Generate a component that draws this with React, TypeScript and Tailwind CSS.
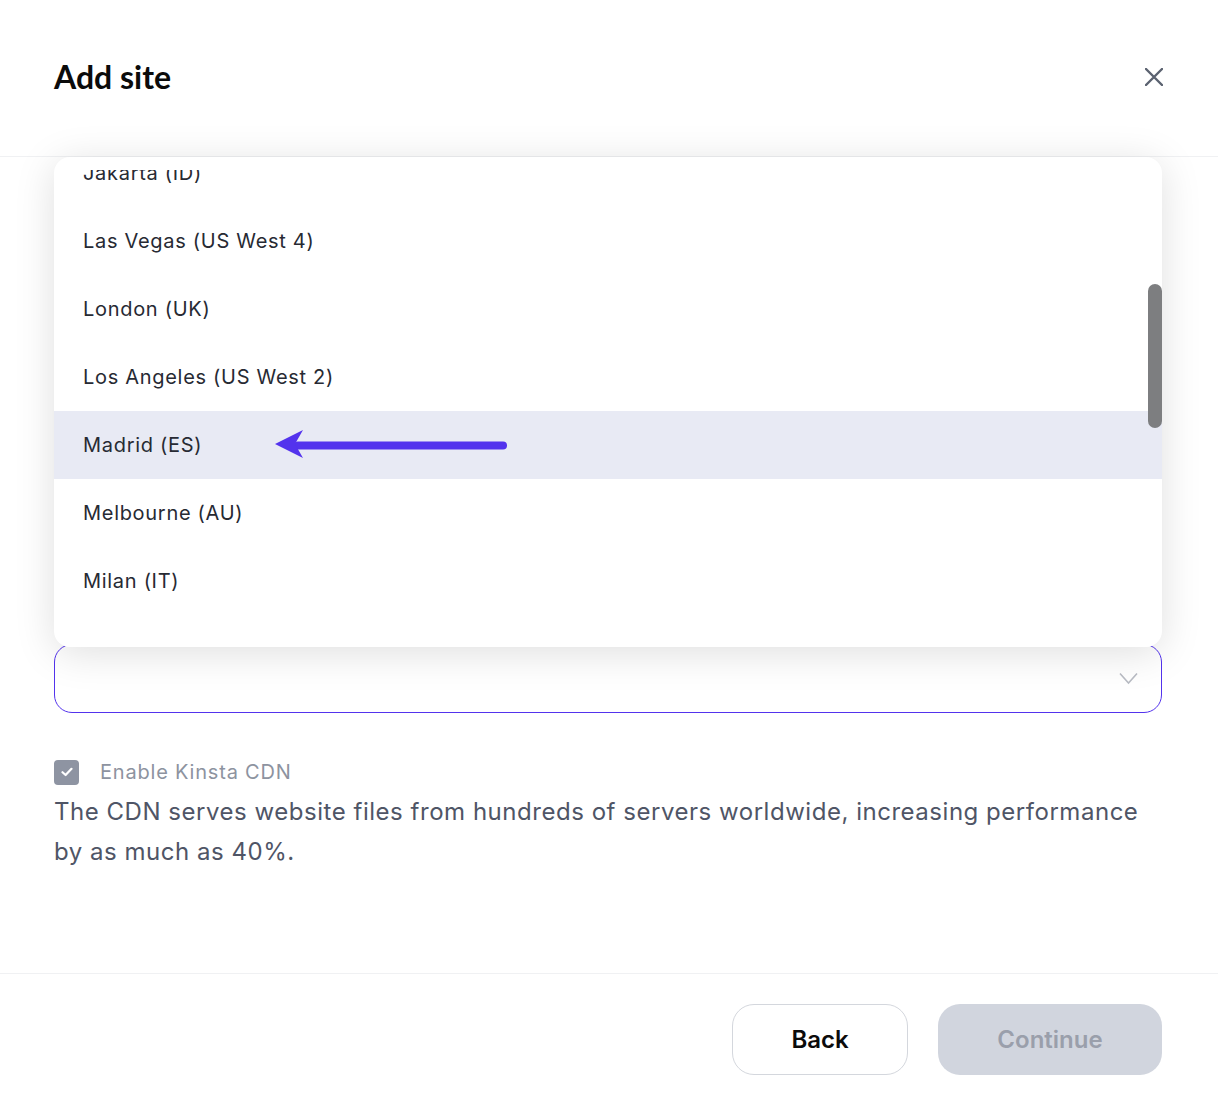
// Add site modal - data center dropdown open
import React from 'react';

const locations = [
  'Jakarta (ID)',
  'Las Vegas (US West 4)',
  'London (UK)',
  'Los Angeles (US West 2)',
  'Madrid (ES)',
  'Melbourne (AU)',
  'Milan (IT)',
];

const selected = 'Madrid (ES)';

function CloseIcon() {
  return (
    <svg width="18" height="18" viewBox="0 0 18 18" fill="none">
      <path d="M1 1L17 17M17 1L1 17" stroke="#5b6270" strokeWidth="2.4" strokeLinecap="round" />
    </svg>
  );
}

function Chevron() {
  return (
    <svg width="19" height="13" viewBox="0 0 19 13" fill="none">
      <path d="M1 1.5L9.5 11L18 1.5" stroke="#b9bcc4" strokeWidth="1.6" />
    </svg>
  );
}

function Arrow() {
  return (
    <svg width="236" height="32" viewBox="0 0 236 32" fill="none">
      <path d="M24 16.5H229" stroke="#5333ed" strokeWidth="8" strokeLinecap="round" />
      <path d="M1 15L29 1L21 15L29 29Z" fill="#5333ed" />
    </svg>
  );
}

export default function App() {
  return (
    <div className="w-[1218px] h-[1100px] bg-white flex flex-col font-['Inter','Noto_Sans',sans-serif] text-[#272a33]">
      {/* 頂部標題 */}
      <div className="h-[157px] shrink-0 flex items-center justify-between pl-[54px] pr-[55px] pb-[3px] border-b border-[#f0f1f3]">
        <h1 className="font-['Lato','Inter',sans-serif] font-bold text-[32px] leading-none text-[#0b0b0b]">Add site</h1>
        <button>
          <CloseIcon />
        </button>
      </div>

      {/* 表單內容 */}
      <div className="flex-1 pl-[54px] pr-[56px] pt-[34px] flex flex-col">
        {/* 下拉選單遮住的欄位 */}
        <div className="h-[69px] rounded-2xl border border-[#5333ed]" />
        <div className="h-[151px]" />
        <div className="h-[69px] rounded-2xl border border-[#d4d7dd]" />
        <div className="h-[164px]" />

        {/* 機房位置選單 */}
        <div className="relative h-[69px]">
          <div className="h-full rounded-[18px] border border-[#5333ed] flex items-center justify-end pr-[23px]">
            <Chevron />
          </div>
          <div className="absolute left-0 right-0 bottom-[66px] h-[490px] bg-white rounded-2xl shadow-[0_6px_40px_rgba(0,0,0,0.13)] pt-[13px] pb-[8px] z-10">
            <div className="h-full overflow-hidden">
              <div className="-mt-[31px]">
                {locations.map((loc) => (
                  <div
                    key={loc}
                    className={`relative h-[68px] flex items-center px-[29px] text-[20px] tracking-[0.035em] ${
                      loc === selected ? 'bg-[#e8eaf4]' : ''
                    }`}
                  >
                    {loc}
                    {loc === selected && (
                      <div className="absolute left-[220px] top-[18px]">
                        <Arrow />
                      </div>
                    )}
                  </div>
                ))}
              </div>
            </div>
            {/* 捲軸 */}
            <div className="absolute right-0 top-[127px] w-[14px] h-[144px] rounded-full bg-[#7d7e80]" />
          </div>
        </div>

        <div className="mt-[44px] flex items-center gap-[21px]">
          <div className="w-[25px] h-[25px] rounded-[4px] bg-[#8e94a2] flex items-center justify-center">
            <svg width="12" height="10" viewBox="0 0 12 10" fill="none">
              <path d="M1.5 5.2L4.6 8L10.5 1.8" stroke="white" strokeWidth="2.2" strokeLinecap="round" strokeLinejoin="round" />
            </svg>
          </div>
          <span className="text-[20px] tracking-[0.04em] text-[#8d93a0]">Enable Kinsta CDN</span>
        </div>
        <p className="mt-[5px] text-[24px] leading-[40px] tracking-[0.022em] text-[#4f5566]">
          The CDN serves website files from hundreds of servers worldwide, increasing performance by as much as 40%.
        </p>
      </div>

      {/* 底部按鈕 */}
      <div className="h-[127px] shrink-0 border-t border-[#f0f1f3] flex justify-end items-start gap-[30px] pr-[56px] pt-[30px]">
        <button className="w-[176px] h-[71px] rounded-[22px] border border-[#d4d7dd] bg-white text-[24px] font-semibold text-[#0b0b0b]">
          Back
        </button>
        <button className="w-[224px] h-[71px] rounded-[22px] bg-[#d1d5de] text-[24px] font-semibold text-[#9a9fab]">
          Continue
        </button>
      </div>
    </div>
  );
}
